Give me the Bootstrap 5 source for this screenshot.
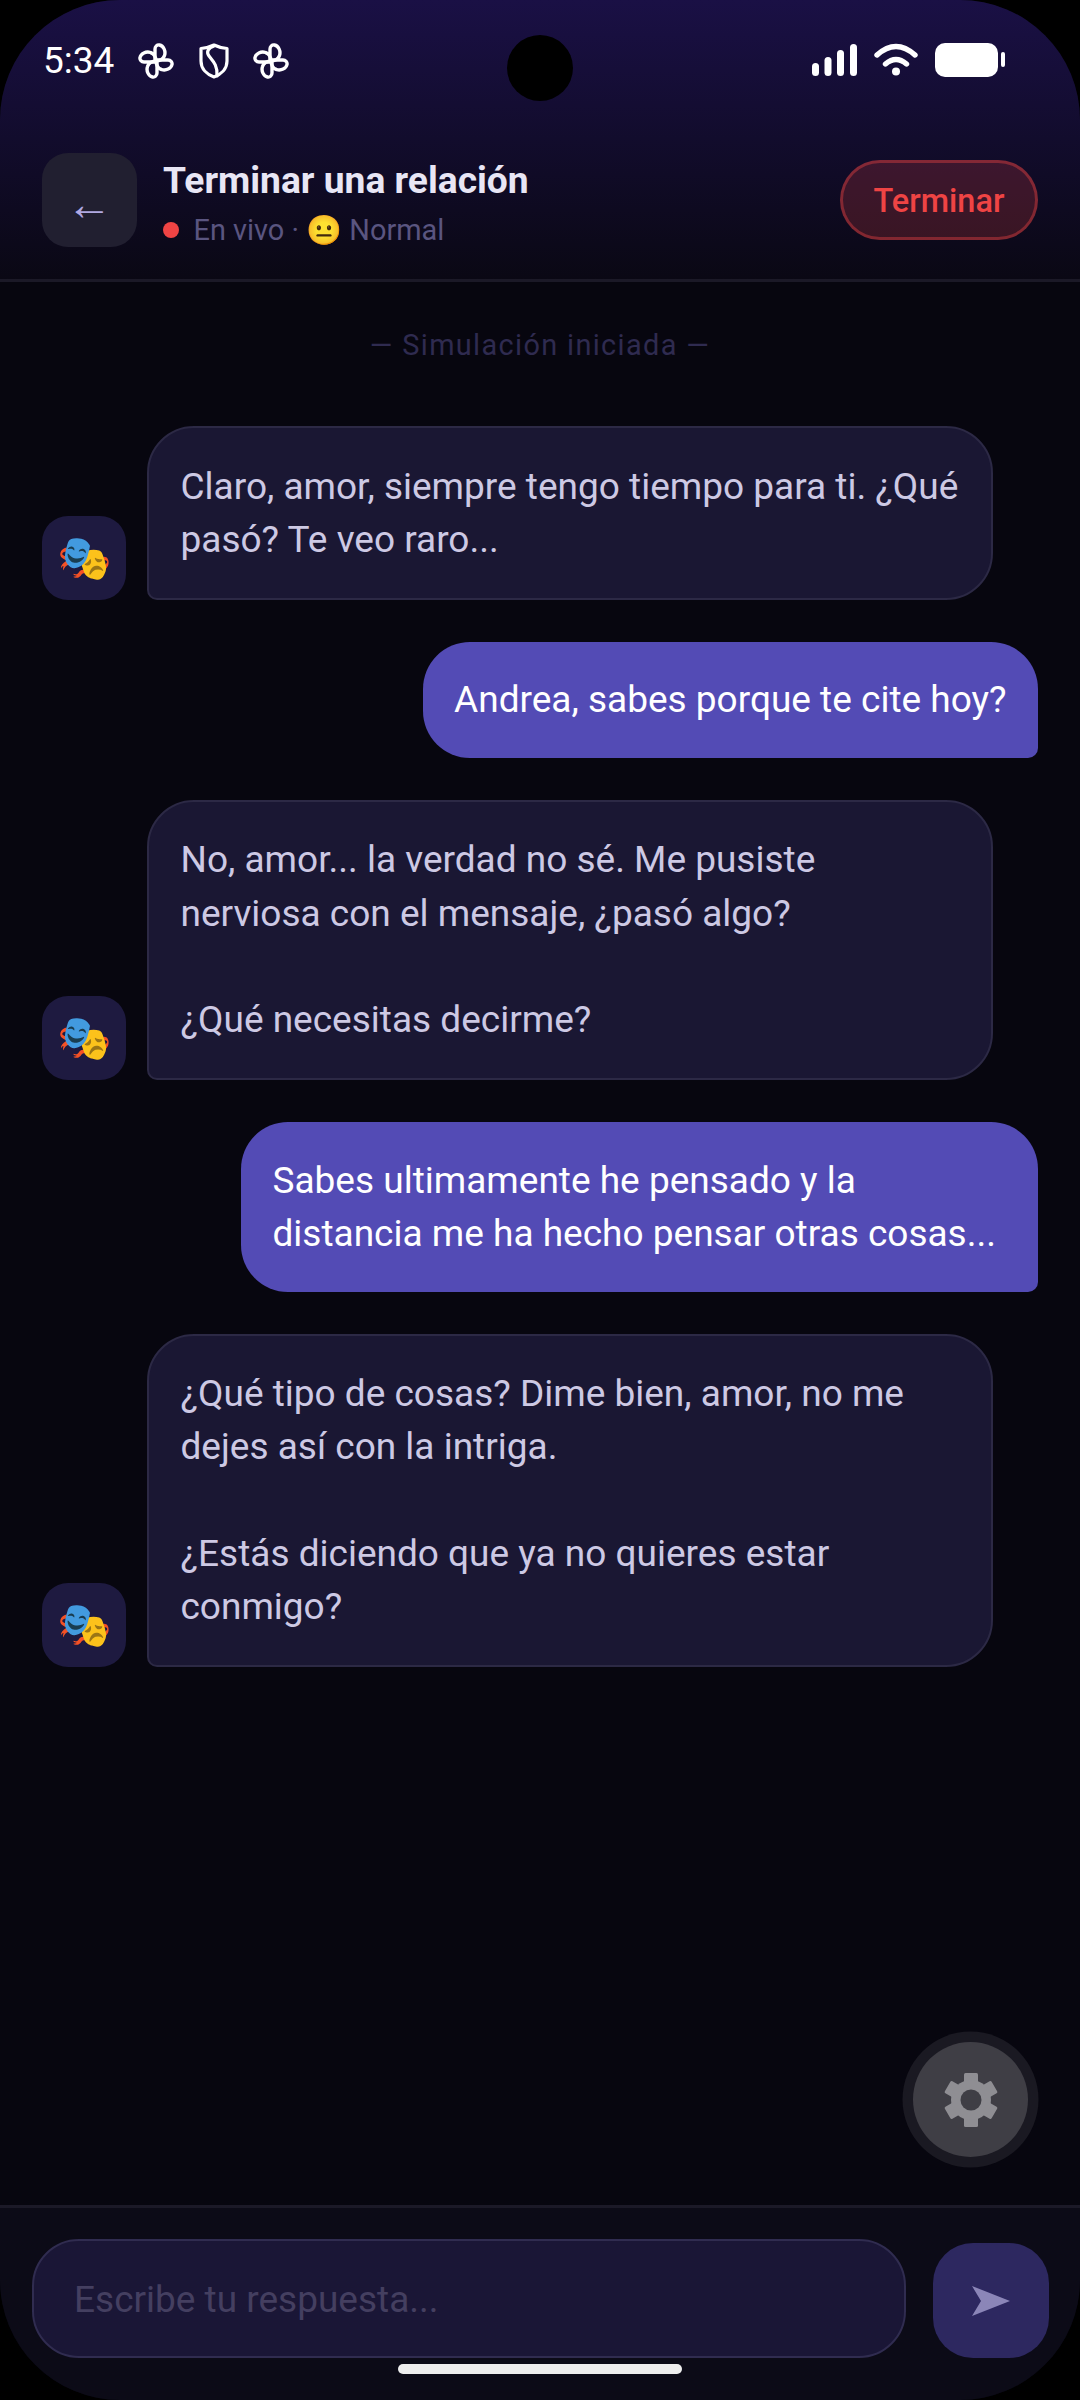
<!DOCTYPE html>
<html lang="es">
<head>
<meta charset="utf-8">
<title>Simulación</title>
<link rel="stylesheet" href="https://cdn.jsdelivr.net/npm/bootstrap@5.3.0/dist/css/bootstrap.min.css">
<style>
html,body{margin:0;background:#000;}
body{width:1080px;height:2400px;overflow:hidden;font-family:Roboto,"Liberation Sans",sans-serif;}
.phone{position:relative;width:1080px;height:2400px;background:#07060f;border-radius:120px;overflow:hidden;}
.topzone{height:282px;background:linear-gradient(180deg,#1a1045 0%,#0a0814 100%);border-bottom:3px solid #1b1927;}
.statusrow{height:126px;padding:43px 75px 0 43px;align-items:flex-start;}
.clock{font-size:37px;line-height:35px;color:#fff;margin-right:24px;}
.shieldicon{margin:0 24px 0 25px;}
.sysicons{gap:17px;}
.notch{position:absolute;left:507px;top:35px;width:66px;height:66px;border-radius:50%;background:#000;}
.headrow{padding:27px 42px 0 42px;}
.backbtn{width:95px;height:94px;border-radius:26px;background:#211f30;color:#b1a9e2;font-size:46px;line-height:1;padding:7px 0 0;border:0;flex:none;}
.headtext{margin-left:26px;padding-top:5px;}
.headtitle{font-size:37.2px;font-weight:700;color:#e8e6f5;line-height:44px;margin-bottom:9px;}
.headsub{font-size:28.9px;color:#5a5580;line-height:38px;}
.livedot{width:16px;height:16px;border-radius:50%;background:#ef4444;margin-right:14.5px;}
.endbtn{width:198px;height:80px;margin-top:7px;border-radius:40px;border:3px solid rgba(239,68,68,.4);background:rgba(239,68,68,.2);color:#ef4444;font-size:32.5px;font-weight:500;padding:2px 0 0;}
.simlabel{font-size:28.9px;letter-spacing:1.35px;color:#2f2b50;text-align:center;line-height:36px;padding:45px 0 63px;margin:0;}
.thread{padding:0 42px;gap:42px;}
.botline{gap:21px;padding-right:45px;align-items:flex-end;}
.botface{width:84px;height:84px;border-radius:26px;background:#1e1a40;font-size:44px;line-height:84px;text-align:center;flex:none;}
.bub{font-size:37px;line-height:53.3px;white-space:pre-line;}
.botbub{flex:1;background:#1a1733;border:2.6px solid #2c2945;border-radius:47px 47px 47px 10px;padding:31.5px 28px 31.5px 31.5px;color:#cdc9e4;}
.userbub{align-self:flex-end;max-width:797px;background:#534bb5;color:#fff;border-radius:47px 47px 10px 47px;padding:31.5px;}
.gearfab{position:absolute;left:913px;top:2042px;width:115px;height:115px;border-radius:50%;background:#3f3e45;box-shadow:0 0 0 10.5px #1a1922;padding:0;border:0;}
.composer{position:absolute;left:0;right:0;top:2205px;bottom:0;background:#0c0b17;border-top:3px solid #1b1927;padding:31px 31px 0 32px;gap:27px;}
.msgfield{width:874px;height:119px;background:#1a1636;border:2.6px solid #302c50;border-radius:47px;color:#d5d2ea;font-size:37px;padding:2px 40px 0;font-family:inherit;outline:0;box-shadow:none;}
.msgfield::placeholder{color:#443f60;opacity:1;}
.sendbtn{width:116px;height:115px;border-radius:40px;background:#2d2860;border:0;padding:0;margin-top:4px;flex:none;}
.homebar{position:absolute;left:398px;top:2364px;width:284px;height:10px;border-radius:5px;background:#eee;}
</style>
</head>
<body>
<div class="phone d-flex flex-column">
  <div class="topzone">
    <div class="statusrow d-flex">
      <span class="clock">5:34</span>
      <svg width="36" height="36" viewBox="0 0 36 36" fill="none" stroke="#fff" stroke-width="3.400" stroke-linejoin="round"><path d="M17 18V6c0-2.500 2-4.500 4.500-4 4 .8 6.500 6 5 10.500C25.500 16 21.500 18 17 18z"/><path transform="rotate(90 18 18)" d="M17 18V6c0-2.500 2-4.500 4.500-4 4 .8 6.500 6 5 10.500C25.500 16 21.500 18 17 18z"/><path transform="rotate(180 18 18)" d="M17 18V6c0-2.500 2-4.500 4.500-4 4 .8 6.500 6 5 10.500C25.500 16 21.500 18 17 18z"/><path transform="rotate(270 18 18)" d="M17 18V6c0-2.500 2-4.500 4.500-4 4 .8 6.500 6 5 10.500C25.500 16 21.500 18 17 18z"/></svg>
      <svg class="shieldicon" width="30" height="36" viewBox="0 0 30 36" fill="none" stroke="#fff" stroke-width="3.200" stroke-linejoin="round" stroke-linecap="round"><path d="M15 2C19 4 23 5 28 5.500V18c0 8-6 13.500-13 16C8 31.500 2 26 2 18V5.500C7 5 11 4 15 2z"/><path d="M15 3C9 5 7 9 10 13c3 4 9 9 8 20"/></svg>
      <svg width="36" height="36" viewBox="0 0 36 36" fill="none" stroke="#fff" stroke-width="3.400" stroke-linejoin="round"><path d="M17 18V6c0-2.500 2-4.500 4.500-4 4 .8 6.500 6 5 10.500C25.500 16 21.500 18 17 18z"/><path transform="rotate(90 18 18)" d="M17 18V6c0-2.500 2-4.500 4.500-4 4 .8 6.500 6 5 10.500C25.500 16 21.500 18 17 18z"/><path transform="rotate(180 18 18)" d="M17 18V6c0-2.500 2-4.500 4.500-4 4 .8 6.500 6 5 10.500C25.500 16 21.500 18 17 18z"/><path transform="rotate(270 18 18)" d="M17 18V6c0-2.500 2-4.500 4.500-4 4 .8 6.500 6 5 10.500C25.500 16 21.500 18 17 18z"/></svg>
      <div class="sysicons ms-auto d-flex align-items-start">
        <svg width="45" height="34" viewBox="0 0 45 34" fill="#fff"><rect x="0" y="20" width="7" height="13" rx="3.500"/><rect x="12.500" y="14" width="7" height="19" rx="3.500"/><rect x="25" y="7" width="7" height="26" rx="3.500"/><rect x="38" y="1" width="7" height="32" rx="3.500"/></svg>
        <svg width="44" height="34" viewBox="0 0 44 34" fill="none" stroke="#fff" stroke-width="5.400" stroke-linecap="round"><path d="M3 12Q22-5 41 12M11.500 21Q22 12 32.500 21"/><circle cx="22" cy="28.500" r="4" fill="#fff" stroke="none"/></svg>
        <svg width="70" height="35" viewBox="0 0 70 35" fill="#fff"><rect x="0" y="0" width="63" height="34" rx="10"/><rect x="66" y="9" width="4" height="15" rx="2"/></svg>
      </div>
    </div>
    <div class="headrow d-flex align-items-start">
      <button class="backbtn btn" type="button">←</button>
      <div class="headtext flex-grow-1">
        <div class="headtitle">Terminar una relación</div>
        <div class="headsub d-flex align-items-center"><span class="livedot"></span>En vivo · 😐 Normal</div>
      </div>
      <button class="endbtn btn" type="button">Terminar</button>
    </div>
  </div>
  <div class="notch"></div>
  <p class="simlabel">— Simulación iniciada —</p>
  <div class="thread d-flex flex-column">
    <div class="botline d-flex"><div class="botface">🎭</div><div class="botbub bub">Claro, amor, siempre tengo tiempo para ti. ¿Qué pasó? Te veo raro...</div></div>
    <div class="userbub bub">Andrea, sabes porque te cite hoy?</div>
    <div class="botline d-flex"><div class="botface">🎭</div><div class="botbub bub">No, amor... la verdad no sé. Me pusiste
nerviosa con el mensaje, ¿pasó algo?

¿Qué necesitas decirme?</div></div>
    <div class="userbub bub">Sabes ultimamente he pensado y la distancia me ha hecho pensar otras cosas...</div>
    <div class="botline d-flex"><div class="botface">🎭</div><div class="botbub bub">¿Qué tipo de cosas? Dime bien, amor, no me dejes así con la intriga.

¿Estás diciendo que ya no quieres estar conmigo?</div></div>
  </div>
  <button class="gearfab btn" type="button" aria-label="Ajustes"><svg width="56" height="56" viewBox="0 0 56 56" fill="#8f8e93"><g><rect x="21" y="1" width="14" height="14" rx="1.500"/><rect x="21" y="1" width="14" height="14" rx="1.500" transform="rotate(60 28 28)"/><rect x="21" y="1" width="14" height="14" rx="1.500" transform="rotate(120 28 28)"/><rect x="21" y="1" width="14" height="14" rx="1.500" transform="rotate(180 28 28)"/><rect x="21" y="1" width="14" height="14" rx="1.500" transform="rotate(240 28 28)"/><rect x="21" y="1" width="14" height="14" rx="1.500" transform="rotate(300 28 28)"/></g><circle cx="28" cy="28" r="20"/><circle cx="28" cy="28" r="10.500" fill="#3f3e45"/></svg></button>
  <div class="composer d-flex align-items-start">
    <input class="msgfield form-control" type="text" placeholder="Escribe tu respuesta...">
    <button class="sendbtn btn" type="button" aria-label="Enviar"><svg width="38" height="30" viewBox="0 0 38 30" fill="#8b86b8"><path d="M0 0 38 15 0 30 9 15z"/></svg></button>
  </div>
  <div class="homebar"></div>
</div>
<script src="https://cdn.jsdelivr.net/npm/bootstrap@5.3.0/dist/js/bootstrap.bundle.min.js"></script>
</body>
</html>
